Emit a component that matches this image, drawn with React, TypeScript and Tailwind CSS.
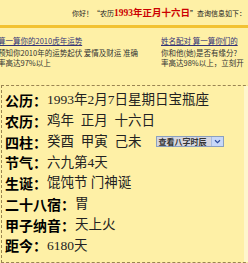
import React from 'react';

// 农历查询结果卡片 — 黄底 + 虚线框

const valueFont = { fontFamily: '"Liberation Serif", "Noto Sans CJK SC", serif' };

function Row({ label, children }: { label: string; children: React.ReactNode }) {
  return (
    <div className="flex h-[20.8px] items-center whitespace-pre">
      <span className="font-bold text-black" style={{ fontFamily: '"Noto Sans CJK SC", sans-serif' }}>
        {label}：
      </span>
      <span className="text-[13.5px] text-[#222]" style={valueFont}>
        {children}
      </span>
    </div>
  );
}

function FakeSelect() {
  return (
    <div className="ml-[14px] flex h-[11px] w-[68px] items-stretch border border-[#8aa0c0] bg-[#d6d6de]">
      <span
        className="flex-1 pl-[2px] text-[8px] leading-[9px] font-bold text-[#333]"
        style={{ fontFamily: '"Noto Sans CJK SC", sans-serif' }}
      >
        查看八字时辰
      </span>
      <span className="flex w-[12px] items-center justify-center border-l border-[#a8bce0] bg-[#c8d8f8]">
        <svg viewBox="0 0 8 6" className="h-[5px] w-[7px]" aria-hidden="true">
          <path d="M1 1.5L4 4.5 7 1.5" fill="none" stroke="#2a4a9a" strokeWidth="1.4" />
        </svg>
      </span>
    </div>
  );
}

export default function App() {
  const cjk = { fontFamily: '"Noto Sans CJK SC", sans-serif' };
  return (
    <div className="h-[263px] w-[248px] overflow-hidden bg-[#fef0a6]">
      {/* ── 顶部提示 ── */}
      <div className="flex h-[25px] items-center whitespace-nowrap pl-[72px] pt-[2px] text-[7px] text-[#222]" style={cjk}>
        你好！“农历
        <span className="text-[9.5px] font-bold text-[#cc0000]" style={{ fontFamily: '"Liberation Serif", "Noto Sans CJK SC", serif' }}>
          1993年正月十六日
        </span>
        ”查询信息如下：
      </div>
      <div className="h-[3px] bg-[#f2c232]" />

      {/* ── 推广链接 ── */}
      <div className="mt-[8px] flex whitespace-nowrap text-[7.5px] leading-[10px] text-[#333]" style={cjk}>
        <div className="-ml-[2px] w-[163px] shrink-0 overflow-hidden">
          <div className="mb-[2px] text-[#333377] underline">算一算你的2010虎年运势</div>
          <div>预知你2010年的运势起伏 爱情及财运 准确</div>
          <div>率高达97%以上</div>
        </div>
        <div className="shrink-0">
          <div className="mb-[2px] text-[#333377] underline">姓名配对 算一算你们的</div>
          <div>你和他(她)是否有缘分?</div>
          <div>率高达98%以上，立刻开</div>
        </div>
      </div>

      {/* ── 查询结果 ── */}
      <div className="mt-[17px] ml-[1px] flex h-[178px] w-[260px] border border-dashed border-[#9a8452] text-[14px]">
        <div className="w-[242px] shrink-0 pt-[4px] pl-[3px]">
          <Row label="公历">1993年2月7日星期日宝瓶座</Row>
          <Row label="农历">鸡年  正月  十六日</Row>
          <div className="flex items-center">
            <Row label="四柱">癸酉  甲寅  己未</Row>
            <FakeSelect />
          </div>
          <Row label="节气">六九第4天</Row>
          <Row label="生诞">馄饨节 门神诞</Row>
          <Row label="二十八宿">胃</Row>
          <Row label="甲子纳音">天上火</Row>
          <Row label="距今">6180天</Row>
        </div>
        <div className="flex-1 bg-[#fff6cc]" />
      </div>
    </div>
  );
}
